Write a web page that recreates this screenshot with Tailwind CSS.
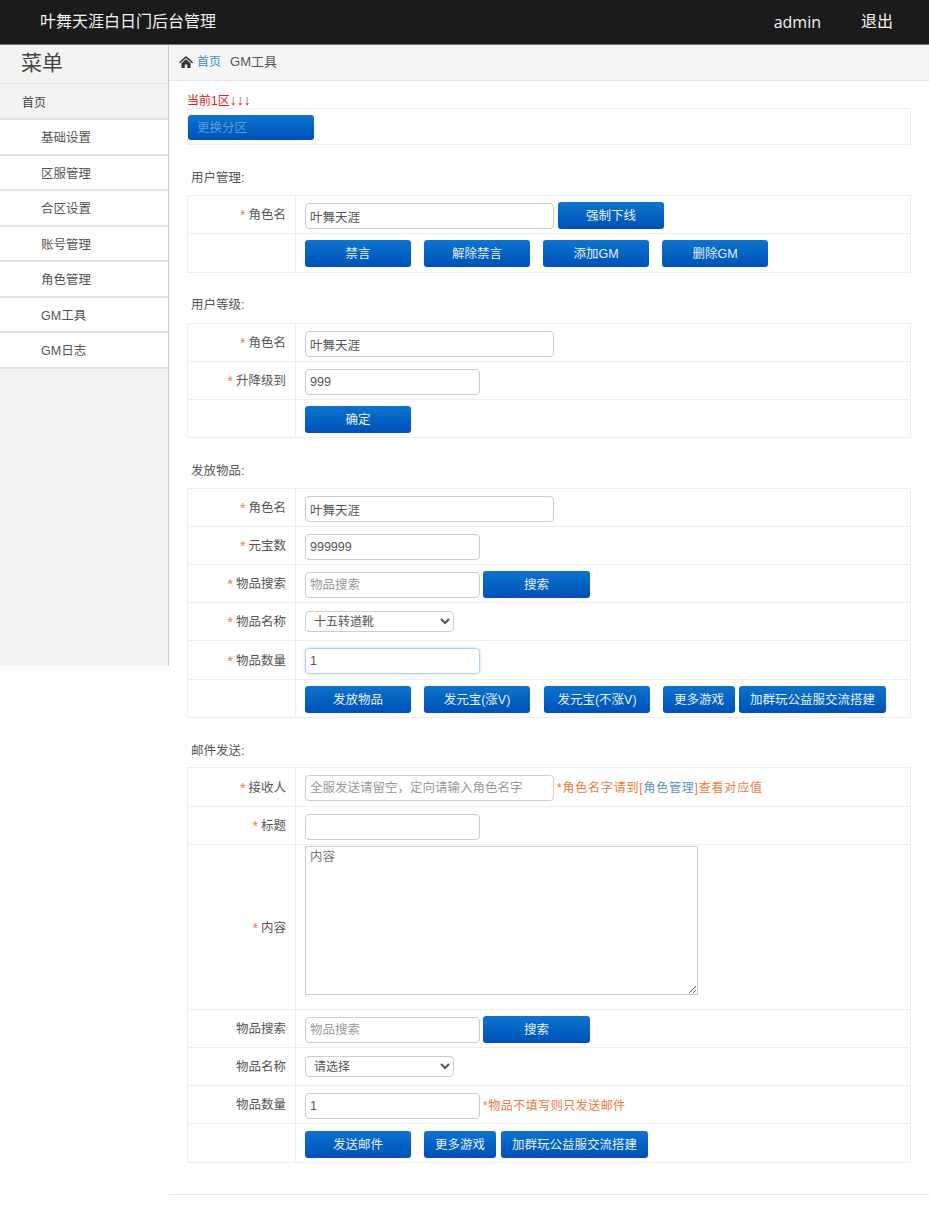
<!DOCTYPE html>
<html lang="zh-CN">
<head>
    <meta charset="UTF-8">
    <title>叶舞天涯白日门后台管理</title>
    <script src="https://cdn.jsdelivr.net/npm/@tailwindcss/browser@4"></script>
</head>
<body class="bg-white text-[12.5px] text-[#555] font-['Liberation_Sans','Noto_Sans_CJK_SC',sans-serif]">
    <!-- Top bar -->
    <header class="h-[45px] bg-[#1b1b1b] border-b border-[#777] flex items-center text-[#f2f2f2]">
        <div class="pl-[40px] text-[16px] flex-1">叶舞天涯白日门后台管理</div>
        <div class="text-[16px] font-['Open_Sans','Noto_Sans_CJK_SC',sans-serif]">admin</div>
        <div class="text-[16px] ml-[40px] mr-[36px]">退出</div>
    </header>

    <div class="flex items-start">
        <!-- Sidebar -->
        <aside class="w-[169px] h-[621px] shrink-0 bg-[#f3f3f3] border-r border-[#ccc]">
            <div class="h-[39px] pl-[21px] text-[21px] leading-[36px] text-[#444] border-b border-[#e4e4e4]">菜单</div>
            <div class="h-[36px] pl-[22px] leading-[39px] text-[#444] text-[12px] border-b-2 border-[#e2e2e2]">首页</div>
            <ul class="bg-white">
                <li class="h-[35.5px] pl-[41px] leading-[37px] border-b-2 border-[#e2e2e2]">基础设置</li>
                <li class="h-[35.5px] pl-[41px] leading-[37px] border-b-2 border-[#e2e2e2]">区服管理</li>
                <li class="h-[35.5px] pl-[41px] leading-[37px] border-b-2 border-[#e2e2e2]">合区设置</li>
                <li class="h-[35.5px] pl-[41px] leading-[37px] border-b-2 border-[#e2e2e2]">账号管理</li>
                <li class="h-[35.5px] pl-[41px] leading-[37px] border-b-2 border-[#e2e2e2]">角色管理</li>
                <li class="h-[35.5px] pl-[41px] leading-[37px] border-b-2 border-[#e2e2e2]">GM工具</li>
                <li class="h-[35.5px] pl-[41px] leading-[37px] border-b-2 border-[#e2e2e2]">GM日志</li>
            </ul>
        </aside>

        <!-- Content -->
        <main class="flex-1 min-w-0">
            <div class="h-[36px] bg-[#f5f5f5] border-b border-[#e5e5e5] flex items-center pl-[10px] pb-[2px]">
                <svg class="w-[14px] h-[12px] text-[#333] mr-[4px]" viewBox="0 0 14 12" fill="currentColor"><path d="M7 0 L14 6.2 L12.9 7.3 L7 2.1 L1.1 7.3 L0 6.2 Z M2.5 7.2 L7 3.3 L11.5 7.2 V12 H8.3 V8.4 H5.7 V12 H2.5 Z"/></svg>
                <span class="text-[#428bca] text-[12px]">首页</span>
                <span class="ml-[9px] text-[13px]">GM工具</span>
            </div>

            <div class="px-[18px]">
                <div class="h-[27px] pt-[11px] leading-[16px] text-[12px] text-[#e02020]">当前1区<span class="text-[14px]">↓↓↓</span></div>
                <div class="h-[37px] border border-[#eee] flex items-center">
                    <button class="w-[126px] h-[25px] rounded-[3px] bg-gradient-to-b from-[#0f74cc] to-[#0050b8] text-[#5b9ddb] text-left pl-[9px] pt-[2px] mt-[1px]">更换分区</button>
                </div>

                <h3 class="h-[50px] pl-[4px] pt-[25px] leading-[17px] font-normal">用户管理:</h3>
                <div class="border border-[#eee]">
                    <div class="h-[37px] flex items-center">
                        <div class="w-[108px] h-full border-r border-[#eee] flex items-center justify-end pr-[9px] pt-[2px]"><span class="text-[#f47a3c] text-[14px] mr-[3px]">*</span>角色名</div>
                        <div class="flex items-center pl-[9px] pt-[3px] gap-[4px]">
                            <input class="w-[249px] h-[26px] border border-[#ccc] rounded-[4px] px-[4px] text-[#555]" value="叶舞天涯">
                            <button class="w-[106px] h-[27px] rounded-[3px] bg-gradient-to-b from-[#0f74cc] to-[#0050b8] text-[#e8f1fb] pt-[2px] -mt-[2px]">强制下线</button>
                        </div>
                    </div>
                    <div class="h-[39px] flex items-center border-t border-[#eee]">
                        <div class="w-[108px] h-full border-r border-[#eee]"></div>
                        <div class="flex items-center pl-[9px] gap-[13px]">
                            <button class="w-[106px] h-[27px] rounded-[3px] bg-gradient-to-b from-[#0f74cc] to-[#0050b8] text-[#e8f1fb] pt-[2px]">禁言</button>
                            <button class="w-[106px] h-[27px] rounded-[3px] bg-gradient-to-b from-[#0f74cc] to-[#0050b8] text-[#e8f1fb] pt-[2px]">解除禁言</button>
                            <button class="w-[106px] h-[27px] rounded-[3px] bg-gradient-to-b from-[#0f74cc] to-[#0050b8] text-[#e8f1fb] pt-[2px]">添加GM</button>
                            <button class="w-[106px] h-[27px] rounded-[3px] bg-gradient-to-b from-[#0f74cc] to-[#0050b8] text-[#e8f1fb] pt-[2px]">删除GM</button>
                        </div>
                    </div>
                </div>

                <h3 class="h-[50px] pl-[4px] pt-[24px] leading-[17px] font-normal">用户等级:</h3>
                <div class="border border-[#eee]">
                    <div class="h-[37px] flex items-center">
                        <div class="w-[108px] h-full border-r border-[#eee] flex items-center justify-end pr-[9px] pt-[2px]"><span class="text-[#f47a3c] text-[14px] mr-[3px]">*</span>角色名</div>
                        <div class="pl-[9px] pt-[3px]"><input class="w-[249px] h-[26px] border border-[#ccc] rounded-[4px] px-[4px] text-[#555]" value="叶舞天涯"></div>
                    </div>
                    <div class="h-[38px] flex items-center border-t border-[#eee]">
                        <div class="w-[108px] h-full border-r border-[#eee] flex items-center justify-end pr-[9px] pt-[2px]"><span class="text-[#f47a3c] text-[14px] mr-[3px]">*</span>升降级到</div>
                        <div class="pl-[9px] pt-[2px]"><input class="w-[175px] h-[26px] border border-[#ccc] rounded-[4px] px-[4px] text-[#555]" value="999"></div>
                    </div>
                    <div class="h-[38px] flex items-center border-t border-[#eee]">
                        <div class="w-[108px] h-full border-r border-[#eee]"></div>
                        <div class="pl-[9px] pt-[2px]"><button class="w-[106px] h-[27px] rounded-[3px] bg-gradient-to-b from-[#0f74cc] to-[#0050b8] text-[#e8f1fb] pt-[2px]">确定</button></div>
                    </div>
                </div>

                <h3 class="h-[50px] pl-[4px] pt-[25px] leading-[17px] font-normal">发放物品:</h3>
                <div class="border border-[#eee]">
                    <div class="h-[37px] flex items-center">
                        <div class="w-[108px] h-full border-r border-[#eee] flex items-center justify-end pr-[9px] pt-[2px]"><span class="text-[#f47a3c] text-[14px] mr-[3px]">*</span>角色名</div>
                        <div class="pl-[9px] pt-[3px]"><input class="w-[249px] h-[26px] border border-[#ccc] rounded-[4px] px-[4px] text-[#555]" value="叶舞天涯"></div>
                    </div>
                    <div class="h-[38px] flex items-center border-t border-[#eee]">
                        <div class="w-[108px] h-full border-r border-[#eee] flex items-center justify-end pr-[9px] pt-[2px]"><span class="text-[#f47a3c] text-[14px] mr-[3px]">*</span>元宝数</div>
                        <div class="pl-[9px] pt-[2px]"><input class="w-[175px] h-[26px] border border-[#ccc] rounded-[4px] px-[4px] text-[#555]" value="999999"></div>
                    </div>
                    <div class="h-[38px] flex items-center border-t border-[#eee]">
                        <div class="w-[108px] h-full border-r border-[#eee] flex items-center justify-end pr-[9px] pt-[2px]"><span class="text-[#f47a3c] text-[14px] mr-[3px]">*</span>物品搜索</div>
                        <div class="flex items-center pl-[9px] pt-[2px] gap-[3px]">
                            <input class="w-[175px] h-[26px] border border-[#ccc] rounded-[4px] px-[4px] text-[#555] placeholder:text-[#999]" placeholder="物品搜索">
                            <button class="w-[107px] h-[27px] rounded-[3px] bg-gradient-to-b from-[#0f74cc] to-[#0050b8] text-[#e8f1fb] pt-[2px] -mt-[1px]">搜索</button>
                        </div>
                    </div>
                    <div class="h-[38px] flex items-center border-t border-[#eee]">
                        <div class="w-[108px] h-full border-r border-[#eee] flex items-center justify-end pr-[9px] pt-[2px]"><span class="text-[#f47a3c] text-[14px] mr-[3px]">*</span>物品名称</div>
                        <div class="pl-[9px]"><select class="w-[149px] h-[21px] border border-[#ccc] rounded-[4px] pl-[4px] text-[12px] text-[#555] bg-white"><option>十五转道靴</option></select></div>
                    </div>
                    <div class="h-[39px] flex items-center border-t border-[#eee]">
                        <div class="w-[108px] h-full border-r border-[#eee] flex items-center justify-end pr-[9px] pt-[2px]"><span class="text-[#f47a3c] text-[14px] mr-[3px]">*</span>物品数量</div>
                        <div class="pl-[9px] pt-[2px]"><input class="w-[175px] h-[26px] border border-[#b5cfe6] rounded-[4px] px-[4px] text-[#555] shadow-[0_0_3px_rgba(102,175,233,0.5)]" value="1"></div>
                    </div>
                    <div class="h-[38px] flex items-center border-t border-[#eee]">
                        <div class="w-[108px] h-full border-r border-[#eee]"></div>
                        <div class="flex items-center pl-[9px] pt-[2px]">
                            <button class="w-[106px] h-[27px] rounded-[3px] bg-gradient-to-b from-[#0f74cc] to-[#0050b8] text-[#e8f1fb] pt-[2px]">发放物品</button>
                            <button class="ml-[13px] w-[106px] h-[27px] rounded-[3px] bg-gradient-to-b from-[#0f74cc] to-[#0050b8] text-[#e8f1fb] pt-[2px]">发元宝(涨V)</button>
                            <button class="ml-[14px] w-[106px] h-[27px] rounded-[3px] bg-gradient-to-b from-[#0f74cc] to-[#0050b8] text-[#e8f1fb] pt-[2px]">发元宝(不涨V)</button>
                            <button class="ml-[13px] w-[72px] h-[27px] rounded-[3px] bg-gradient-to-b from-[#0f74cc] to-[#0050b8] text-[#e8f1fb] pt-[2px]">更多游戏</button>
                            <button class="ml-[4px] w-[147px] h-[27px] rounded-[3px] bg-gradient-to-b from-[#0f74cc] to-[#0050b8] text-[#e8f1fb] pt-[2px]">加群玩公益服交流搭建</button>
                        </div>
                    </div>
                </div>

                <h3 class="h-[49px] pl-[4px] pt-[25px] leading-[17px] font-normal">邮件发送:</h3>
                <div class="border border-[#eee]">
                    <div class="h-[38px] flex items-center">
                        <div class="w-[108px] h-full border-r border-[#eee] flex items-center justify-end pr-[9px] pt-[2px]"><span class="text-[#f47a3c] text-[14px] mr-[3px]">*</span>接收人</div>
                        <div class="flex items-center pl-[9px] pt-[2px] gap-[3px]">
                            <input class="w-[249px] h-[26px] border border-[#ccc] rounded-[4px] px-[4px] text-[#555] placeholder:text-[#999]" placeholder="全服发送请留空&#xFF0C;定向请输入角色名字">
                            <span class="text-[#ee7a3c] text-[12px] tracking-[0.8px] -mt-[1px]">*角色名字请到[<span class="text-[#5b8fc4]">角色管理</span>]查看对应值</span>
                        </div>
                    </div>
                    <div class="h-[38px] flex items-center border-t border-[#eee]">
                        <div class="w-[108px] h-full border-r border-[#eee] flex items-center justify-end pr-[9px] pt-[2px]"><span class="text-[#f47a3c] text-[14px] mr-[3px]">*</span>标题</div>
                        <div class="pl-[9px] pt-[2px]"><input class="w-[175px] h-[26px] border border-[#ccc] rounded-[4px] px-[4px] text-[#555]"></div>
                    </div>
                    <div class="h-[165px] flex items-center border-t border-[#eee]">
                        <div class="w-[108px] h-full border-r border-[#eee] flex items-center justify-end pr-[9px] pt-[2px]"><span class="text-[#f47a3c] text-[14px] mr-[3px]">*</span>内容</div>
                        <div class="pl-[9px] flex items-center -mt-[13px]"><textarea class="block w-[393px] h-[149px] border border-[#ccc] px-[4px] py-[1px] text-[#555] placeholder:text-[#777]" placeholder="内容"></textarea></div>
                    </div>
                    <div class="h-[38px] flex items-center border-t border-[#eee]">
                        <div class="w-[108px] h-full border-r border-[#eee] flex items-center justify-end pr-[9px] pt-[2px]">物品搜索</div>
                        <div class="flex items-center pl-[9px] pt-[2px] gap-[3px]">
                            <input class="w-[175px] h-[26px] border border-[#ccc] rounded-[4px] px-[4px] text-[#555] placeholder:text-[#999]" placeholder="物品搜索">
                            <button class="w-[107px] h-[27px] rounded-[3px] bg-gradient-to-b from-[#0f74cc] to-[#0050b8] text-[#e8f1fb] pt-[2px] -mt-[1px]">搜索</button>
                        </div>
                    </div>
                    <div class="h-[38px] flex items-center border-t border-[#eee]">
                        <div class="w-[108px] h-full border-r border-[#eee] flex items-center justify-end pr-[9px] pt-[2px]">物品名称</div>
                        <div class="pl-[9px]"><select class="w-[149px] h-[21px] border border-[#ccc] rounded-[4px] pl-[4px] text-[12px] text-[#555] bg-white"><option>请选择</option></select></div>
                    </div>
                    <div class="h-[38px] flex items-center border-t border-[#eee]">
                        <div class="w-[108px] h-full border-r border-[#eee] flex items-center justify-end pr-[9px] pt-[2px]">物品数量</div>
                        <div class="flex items-center pl-[9px] pt-[2px] gap-[3px]">
                            <input class="w-[175px] h-[26px] border border-[#ccc] rounded-[4px] px-[4px] text-[#555]" value="1">
                            <span class="text-[#ee7a3c] text-[12px] tracking-[0.5px]">*物品不填写则只发送邮件</span>
                        </div>
                    </div>
                    <div class="h-[39px] flex items-center border-t border-[#eee]">
                        <div class="w-[108px] h-full border-r border-[#eee]"></div>
                        <div class="flex items-center pl-[9px] pt-[2px]">
                            <button class="w-[106px] h-[27px] rounded-[3px] bg-gradient-to-b from-[#0f74cc] to-[#0050b8] text-[#e8f1fb] pt-[2px]">发送邮件</button>
                            <button class="ml-[13px] w-[72px] h-[27px] rounded-[3px] bg-gradient-to-b from-[#0f74cc] to-[#0050b8] text-[#e8f1fb] pt-[2px]">更多游戏</button>
                            <button class="ml-[5px] w-[147px] h-[27px] rounded-[3px] bg-gradient-to-b from-[#0f74cc] to-[#0050b8] text-[#e8f1fb] pt-[2px]">加群玩公益服交流搭建</button>
                        </div>
                    </div>
                </div>
            </div>

            <div class="mt-[31px] h-[18px] border-t border-[#e5e5e5]"></div>
        </main>
    </div>
</body>
</html>
